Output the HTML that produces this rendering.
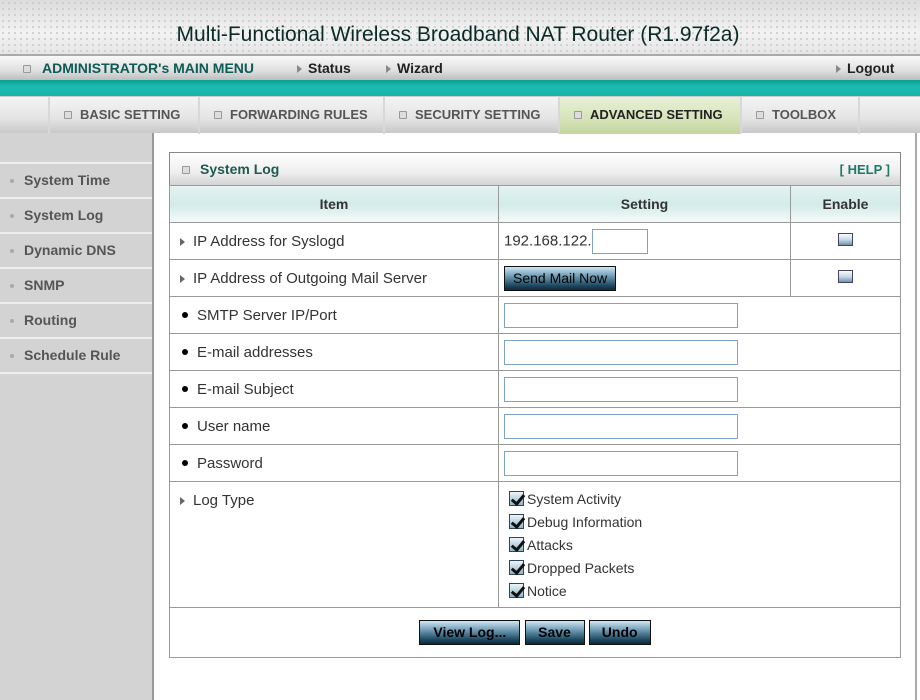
<!DOCTYPE html>
<html><head><meta charset="utf-8"><style>
*{margin:0;padding:0;box-sizing:border-box}
body{width:920px;height:700px;position:relative;overflow:hidden;background:#fff;font-family:"Liberation Sans",Arial,sans-serif;font-size:14px;color:#222}
.a{position:absolute}
#hdr{left:0;top:0;width:920px;height:54px;background:radial-gradient(circle,#c8c8c8 0.8px,transparent 1px) 0 0/6px 6px,linear-gradient(#dcdcdc,#f2f2f2 60%,#e6e6e6)}
#title{left:0;top:23px;width:920px;text-align:center;font-size:21px;color:#0a2a26;padding-right:4px}
#menu{left:0;top:54px;width:920px;height:26px;background:linear-gradient(#f8f8f8,#e0e0e0 60%,#bdbdbd);border-top:2px solid #aaa}
#teal{left:0;top:80px;width:920px;height:16px;background:linear-gradient(#0e9e92,#1bbcb0 40%,#19b3a7)}
#tabs{left:0;top:96px;width:920px;height:37px;background:linear-gradient(#f4f4f4,#e4e4e4 60%,#c8c8c8);border-top:1px solid #ccc}
.tab{position:absolute;top:0;height:37px;border-left:2px solid #d8d8d8;font-weight:bold;font-size:13px;color:#555;line-height:36px;padding-left:14px}
.sq{display:inline-block;width:8px;height:8px;border:1px solid #999;background:#ddd;border-radius:1px;margin-right:8px;vertical-align:0}
#side{left:0;top:133px;width:154px;height:567px;background:#d3d3d3;border-right:2px solid #999}
.si{position:absolute;left:0;width:152px;height:35px;border-top:2px solid #eee;font-weight:bold;font-size:14px;color:#555;line-height:33px;padding-left:10px}
.si i{display:inline-block;width:4px;height:4px;border-radius:2px;background:#aaa;margin-right:10px;vertical-align:2px}
#rline{left:915px;top:133px;width:2px;height:567px;background:#aaa}
#panel{left:169px;top:152px;width:732px;height:506px;border:1px solid #888}
table{position:absolute;left:169px;top:185px;border-collapse:collapse;width:732px}
td{border:1px solid #999;height:37px;font-size:15px;color:#333;padding-left:10px}
.th td{background:linear-gradient(#e2f2f0,#d3ebe8 50%,#f4fbfa);font-weight:bold;text-align:center;padding:0;font-size:14px}
.tri{display:inline-block;width:0;height:0;border-left:5px solid #666;border-top:4px solid transparent;border-bottom:4px solid transparent;margin-right:8px}
.dot{display:inline-block;width:6px;height:6px;border-radius:3px;background:#000;margin:0 9px 0 12px;vertical-align:2px}
.in{display:inline-block;width:234px;height:25px;border:1px solid #7ea3c4;vertical-align:middle;background:#fff}
.cb{display:inline-block;width:15px;height:13px;border:1px solid #446;background:linear-gradient(#fafafa,#c8dbe6 50%,#6f93aa)}
.btn{display:inline-block;border:1px solid #111;background:linear-gradient(#cfe6f2,#6e9ab4 40%,#1f4a63 80%,#0d2838);color:#000;font-size:14px;height:25px;line-height:22px;padding:0 8px;vertical-align:middle}
.ck{display:block;height:23px;line-height:23px;padding-left:0;font-size:14px}
.ck b{display:inline-block;width:15px;height:15px;border:1px solid #345;background:linear-gradient(#eef6fa,#8fb3c9);vertical-align:-2px;margin-right:3px;position:relative}
.ck b:after{content:"";position:absolute;left:4px;top:0px;width:5px;height:10px;border:solid #111;border-width:0 3px 3px 0;transform:rotate(40deg)}
</style></head><body>
<div id="hdr" class="a"></div>
<div id="title" class="a">Multi-Functional Wireless Broadband NAT Router (R1.97f2a)</div>
<div id="menu" class="a">
 <span class="a" style="left:23px;top:4px;font-weight:bold;font-size:14px;color:#0e5a55"><span class="sq" style="margin-right:11px"></span>ADMINISTRATOR's MAIN MENU</span>
 <span class="a" style="left:297px;top:4px;font-weight:bold;font-size:14px;color:#222"><span class="tri" style="border-left-color:#888;margin-right:6px"></span>Status</span>
 <span class="a" style="left:386px;top:4px;font-weight:bold;font-size:14px;color:#222"><span class="tri" style="border-left-color:#888;margin-right:6px"></span>Wizard</span>
 <span class="a" style="left:836px;top:4px;font-weight:bold;font-size:14px;color:#222"><span class="tri" style="border-left-color:#888;margin-right:6px"></span>Logout</span>
</div>
<div id="teal" class="a"></div>
<div id="tabs" class="a">
 <div class="tab" style="left:48px;width:150px"><span class="sq"></span>BASIC SETTING</div>
 <div class="tab" style="left:198px;width:185px"><span class="sq"></span>FORWARDING RULES</div>
 <div class="tab" style="left:383px;width:175px"><span class="sq"></span>SECURITY SETTING</div>
 <div class="tab" style="left:558px;width:182px;background:linear-gradient(#e8f0d8,#d6e4b8 60%,#c4d4a0);color:#222"><span class="sq"></span>ADVANCED SETTING</div>
 <div class="tab" style="left:740px;width:118px"><span class="sq"></span>TOOLBOX</div>
 <div class="tab" style="left:858px;width:62px"></div>
</div>
<div id="side" class="a">
 <div class="si" style="top:29px"><i></i>System Time</div>
 <div class="si" style="top:64px"><i></i>System Log</div>
 <div class="si" style="top:99px"><i></i>Dynamic DNS</div>
 <div class="si" style="top:134px"><i></i>SNMP</div>
 <div class="si" style="top:169px"><i></i>Routing</div>
 <div class="si" style="top:204px"><i></i>Schedule Rule</div>
 <div class="si" style="top:239px;height:2px"></div>
</div>
<div id="rline" class="a"></div>
<div id="panel" class="a">
 <div style="height:33px;background:linear-gradient(#fff,#eee 60%,#d4d4d4);border-bottom:1px solid #aaa;position:relative">
  <span class="a" style="left:12px;top:8px;font-weight:bold;font-size:14px;color:#1d5a50"><span class="sq" style="margin-right:10px"></span>System Log</span>
  <span class="a" style="right:10px;top:9px;font-weight:bold;font-size:13px;color:#1d7a6a">[ HELP ]</span>
 </div>
</div>
<table>
<tr class="th"><td style="width:329px">Item</td><td style="width:292px">Setting</td><td>Enable</td></tr>
<tr><td><span class="tri"></span>IP Address for Syslogd</td><td style="padding-left:5px">192.168.122.<span class="in" style="width:56px"></span></td><td style="text-align:center;padding:0"><span class="cb"></span></td></tr>
<tr><td><span class="tri"></span>IP Address of Outgoing Mail Server</td><td style="padding-left:5px"><span class="btn">Send Mail Now</span></td><td style="text-align:center;padding:0"><span class="cb"></span></td></tr>
<tr><td style="padding:0"><span class="dot"></span>SMTP Server IP/Port</td><td colspan="2" style="padding-left:5px"><span class="in"></span></td></tr>
<tr><td style="padding:0"><span class="dot"></span>E-mail addresses</td><td colspan="2" style="padding-left:5px"><span class="in"></span></td></tr>
<tr><td style="padding:0"><span class="dot"></span>E-mail Subject</td><td colspan="2" style="padding-left:5px"><span class="in"></span></td></tr>
<tr><td style="padding:0"><span class="dot"></span>User name</td><td colspan="2" style="padding-left:5px"><span class="in"></span></td></tr>
<tr><td style="padding:0"><span class="dot"></span>Password</td><td colspan="2" style="padding-left:5px"><span class="in"></span></td></tr>
<tr><td style="height:126px;vertical-align:top;padding-top:10px"><span class="tri"></span>Log Type</td><td colspan="2" style="padding:6px 0 0 10px;vertical-align:top">
<span class="ck"><b></b>System Activity</span><span class="ck"><b></b>Debug Information</span><span class="ck"><b></b>Attacks</span><span class="ck"><b></b>Dropped Packets</span><span class="ck"><b></b>Notice</span></td></tr>
<tr><td colspan="3" style="height:50px;text-align:center;padding:0"><span class="btn" style="font-weight:bold;width:101px">View Log...</span> <span class="btn" style="font-weight:bold;width:60px">Save</span> <span class="btn" style="font-weight:bold;width:62px">Undo</span></td></tr>
</table>
</body></html>
